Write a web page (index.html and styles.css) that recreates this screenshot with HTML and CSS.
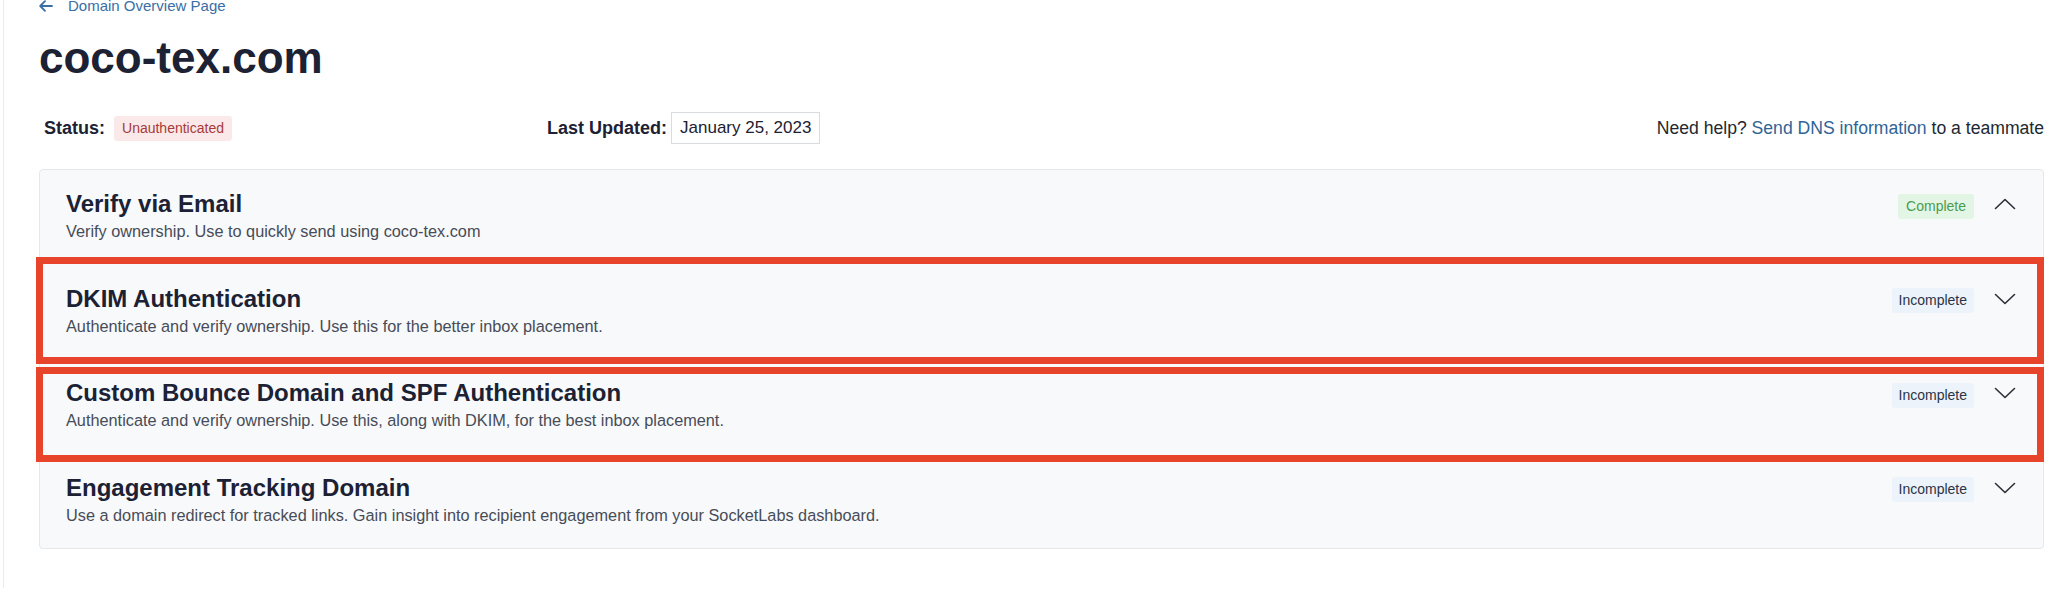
FILE: index.html
```html
<!DOCTYPE html>
<html lang="en">

<head>
    <meta charset="UTF-8">
    <meta name="viewport" content="width=device-width, initial-scale=1.0">
    <title>coco-tex.com - Domain</title>
    <link rel="stylesheet" href="styles.css">
</head>

<body>
    <div class="page">
        <!-- Back link -->
        <a class="back-link" href="#">
            <svg class="back-arrow" width="14" height="12" viewBox="0 0 14 12">
                <path d="M13 6H1.5M6 1.2L1.2 6L6 10.8" fill="none" stroke="currentColor" stroke-width="1.8" stroke-linecap="round" stroke-linejoin="round" />
            </svg>
            Domain Overview Page
        </a>

        <h1 class="domain-title">coco-tex.com</h1>

        <!-- Status row -->
        <div class="info-row">
            <div class="info-status">
                <span class="info-label">Status:</span>
                <span class="badge badge-danger">Unauthenticated</span>
            </div>
            <div class="info-updated">
                <span class="info-label">Last Updated:</span>
                <span class="date-box">January 25, 2023</span>
            </div>
            <div class="info-help">
                Need help? <a href="#">Send DNS information</a> to a teammate
            </div>
        </div>

        <!-- Steps -->
        <div class="steps">
            <div class="step">
                <div class="step-text">
                    <h2 class="step-title">Verify via Email</h2>
                    <p class="step-desc">Verify ownership. Use to quickly send using coco-tex.com</p>
                </div>
                <div class="step-side">
                    <span class="badge badge-success">Complete</span>
                    <svg class="chevron" width="22" height="12" viewBox="0 0 22 12">
                        <path d="M1.5 10.5L11 1.5L20.5 10.5" fill="none" stroke="currentColor" stroke-width="1.6" stroke-linecap="round" stroke-linejoin="round" />
                    </svg>
                </div>
            </div>

            <div class="step marked marked-first">
                <div class="step-text">
                    <h2 class="step-title">DKIM Authentication</h2>
                    <p class="step-desc">Authenticate and verify ownership. Use this for the better inbox placement.</p>
                </div>
                <div class="step-side">
                    <span class="badge badge-info">Incomplete</span>
                    <svg class="chevron" width="22" height="12" viewBox="0 0 22 12">
                        <path d="M1.5 1.5L11 10.5L20.5 1.5" fill="none" stroke="currentColor" stroke-width="1.6" stroke-linecap="round" stroke-linejoin="round" />
                    </svg>
                </div>
            </div>

            <div class="step marked marked-second">
                <div class="step-text">
                    <h2 class="step-title">Custom Bounce Domain and SPF Authentication</h2>
                    <p class="step-desc">Authenticate and verify ownership. Use this, along with DKIM, for the best inbox placement.</p>
                </div>
                <div class="step-side">
                    <span class="badge badge-info">Incomplete</span>
                    <svg class="chevron" width="22" height="12" viewBox="0 0 22 12">
                        <path d="M1.5 1.5L11 10.5L20.5 1.5" fill="none" stroke="currentColor" stroke-width="1.6" stroke-linecap="round" stroke-linejoin="round" />
                    </svg>
                </div>
            </div>

            <div class="step">
                <div class="step-text">
                    <h2 class="step-title">Engagement Tracking Domain</h2>
                    <p class="step-desc">Use a domain redirect for tracked links. Gain insight into recipient engagement from your SocketLabs dashboard.</p>
                </div>
                <div class="step-side">
                    <span class="badge badge-info">Incomplete</span>
                    <svg class="chevron" width="22" height="12" viewBox="0 0 22 12">
                        <path d="M1.5 1.5L11 10.5L20.5 1.5" fill="none" stroke="currentColor" stroke-width="1.6" stroke-linecap="round" stroke-linejoin="round" />
                    </svg>
                </div>
            </div>
        </div>
    </div>
</body>

</html>
```

FILE: styles.css
```css
/* Base */
body {
    font-family: "Liberation Sans", Arial, sans-serif;
    background-color: #ffffff;
    color: #1c2133;
    margin: 0;
    padding: 0;
}

.page {
    margin-left: 3px;
    border-left: 1px solid #ececec;
    padding: 0 4px 0 35px;
    min-height: 591px;
    box-sizing: border-box;
}

/* Back link */
.back-link {
    display: flex;
    align-items: center;
    gap: 15px;
    margin-top: -3px;
    font-size: 15px;
    line-height: 18px;
    color: #3a6ea5;
    text-decoration: none;
}

.back-arrow {
    flex-shrink: 0;
}

.domain-title {
    margin: 17px 0 0 0;
    font-size: 44px;
    line-height: 52px;
    font-weight: bold;
    color: #1c2133;
}

/* Status row */
.info-row {
    display: flex;
    align-items: center;
    height: 32px;
    margin-top: 28px;
    padding-left: 5px;
    font-size: 18px;
}

.info-status {
    display: flex;
    align-items: center;
    gap: 9px;
    width: 503px;
}

.info-updated {
    display: flex;
    align-items: center;
    gap: 4px;
}

.info-label {
    font-weight: bold;
    color: #1c2133;
}

.date-box {
    border: 1px solid #d9dcdf;
    padding: 0 8px;
    height: 30px;
    line-height: 30px;
    font-size: 17px;
    color: #1c2133;
}

.info-help {
    margin-left: auto;
    font-size: 17.6px;
    color: #222831;
}

.info-help a {
    color: #2f6497;
    text-decoration: none;
}

/* Badges */
.badge {
    display: inline-block;
    font-size: 14px;
    line-height: 25px;
    padding: 0 8px;
    border-radius: 3px;
}

.badge-danger {
    background-color: #fbe9e9;
    color: #a63a3a;
}

.badge-success {
    background-color: #e3f5e5;
    color: #4a9c4f;
}

.badge-info {
    background-color: #edf3fb;
    color: #2b3445;
    padding: 0 7px;
}

/* Steps card */
.steps {
    margin-top: 25px;
    background-color: #f7f9fb;
    border: 1px solid #e5e7ea;
    border-radius: 4px;
}

.step {
    position: relative;
    display: flex;
    align-items: flex-start;
    padding: 20px 27px 23.5px 26px;
}

.step-text {
    flex: 1;
}

.step-title {
    margin: 0;
    font-size: 24px;
    line-height: 28px;
    font-weight: bold;
    color: #1c2133;
}

.step-desc {
    margin: 4px 0 0 0;
    font-size: 16.3px;
    line-height: 19px;
    color: #474c57;
}

.step-side {
    display: flex;
    align-items: center;
    gap: 20px;
    height: 28px;
    color: #2c2f36;
}

.step-side .badge {
    margin-top: 4px;
}

/* Red annotation boxes drawn over the rows */
.marked::after {
    content: "";
    position: absolute;
    left: -4px;
    right: -1px;
    border: 7px solid #e8432b;
    pointer-events: none;
}

.marked-first::after {
    top: -8px;
    bottom: -5px;
}

.marked-second::after {
    top: 8px;
    bottom: -8px;
}
```
